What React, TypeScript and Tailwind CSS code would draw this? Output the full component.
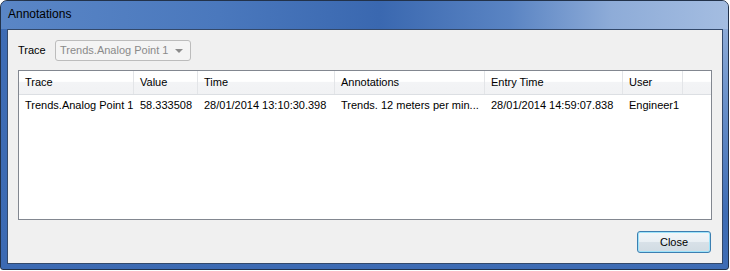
import React from "react";

const columns = ["Trace", "Value", "Time", "Annotations", "Entry Time", "User", ""];

const rows = [
  [
    "Trends.Analog Point 1",
    "58.333508",
    "28/01/2014 13:10:30.398",
    "Trends. 12 meters per min...",
    "28/01/2014 14:59:07.838",
    "Engineer1",
    "",
  ],
];

export default function App() {
  return (
    <div className="w-[730px] h-[271px] bg-white font-['Liberation_Sans',Arial,sans-serif] text-[11px] text-black">
      {/* Window frame */}
      <div className="w-[729px] h-[270px] flex flex-col overflow-hidden rounded-t-[7px] rounded-b-[3px] border border-[#22324a] bg-[linear-gradient(200deg,#9ab5dd_0%,#6d93cb_18%,#3f6db5_40%,#3c6ab3_100%)] pl-[6px] pr-[5px] pb-[5px]">
        {/* Title bar */}
        <div className="-ml-[6px] -mr-[5px] h-[28px] shrink-0 flex items-center pl-[7px] pb-[2px] text-[12px] bg-[linear-gradient(90deg,#5a86c6_0%,#4a78bd_30%,#3a68b0_52%,#5a84c3_70%,#8eacd8_84%,#a4bde1_100%)]">
          Annotations
        </div>

        {/* Client area */}
        <div className="flex-1 flex flex-col border border-[#33496b] bg-[#f0f0f0] px-[10px] pt-[10px]">
          <div className="flex items-center h-[21px]">
            <span className="w-[37px]">Trace</span>
            <div className="w-[136px] h-[21px] flex items-center justify-between rounded-[3px] border border-[#bcbcbc] bg-[#f4f4f4] pl-[4px] pr-[7px] text-[#8a8a8a]">
              <span>Trends.Analog Point 1</span>
              <span className="w-0 h-0 border-l-[4px] border-r-[4px] border-t-[4px] border-l-transparent border-r-transparent border-t-[#8c8c8c]" />
            </div>
          </div>

          {/* List */}
          <div className="mt-[9px] w-[694px] h-[150px] border border-[#828790] bg-white">
            <div className="grid grid-cols-[115px_64px_137px_150px_138px_60px_1fr] h-[24px] border-b border-[#dcdfe3] bg-[linear-gradient(180deg,#ffffff_0%,#ffffff_45%,#f3f4f6_50%,#f1f2f4_100%)]">
              {columns.map((c, i) => (
                <div
                  key={i}
                  className={`flex items-center pl-[6px] ${i < columns.length - 1 ? "border-r border-[#e3e5e8]" : ""}`}
                >
                  {c}
                </div>
              ))}
            </div>
            {rows.map((r, ri) => (
              <div key={ri} className="grid grid-cols-[115px_64px_137px_150px_138px_60px_1fr] h-[20px]">
                {r.map((cell, ci) => (
                  <div key={ci} className="flex items-center pl-[6px] whitespace-nowrap overflow-hidden">
                    {cell}
                  </div>
                ))}
              </div>
            ))}
          </div>

          <div className="flex justify-end mt-[11px] pr-[1px]">
            <button className="w-[74px] h-[22px] rounded-[3px] border border-[#3c7fb1] bg-[linear-gradient(180deg,#f2f6f9_0%,#e9eff4_50%,#d8e1e8_52%,#d1dbe3_100%)] shadow-[inset_0_0_0_1px_#9ee3fa] text-[11px] text-black">
              Close
            </button>
          </div>
        </div>
      </div>
    </div>
  );
}
